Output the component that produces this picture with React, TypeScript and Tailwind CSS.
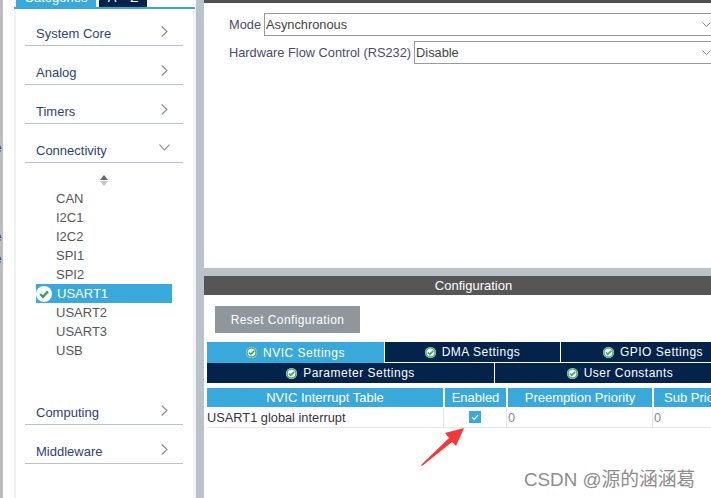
const font = "font-['Liberation_Sans',Arial,sans-serif]";

// tick badge used on the tabs (ringed) and on the selected peripheral (plain)
const OkBadge = ({ size = 11, ring = true }: { size?: number; ring?: boolean }) => (
  <svg width={size} height={size} viewBox="0 0 16 16" className="shrink-0">
    <circle cx="8" cy="8" r="8" fill="#ffffff" />
    {ring && <circle cx="8" cy="8" r="6.6" fill="#ffffff" stroke="#46ad72" strokeWidth="2.2" />}
    <path d="M4.2 8 7 10.8 12 5.4" fill="none" stroke="#3a9f63" strokeWidth="2.4" />
  </svg>
);

const ArrowRight = () => (
  <svg width="7" height="11" viewBox="0 0 7 11" className="mb-[7px]">
    <path d="M.7.5 6 5.5.7 10.5" fill="none" stroke="#8a8a8a" strokeWidth="1.1" />
  </svg>
);

const ArrowDown = () => (
  <svg width="11" height="7" viewBox="0 0 11 7" className="mb-[10px] -mr-[2px]">
    <path d="M.5.7 5.5 6 10.5.7" fill="none" stroke="#8a8a8a" strokeWidth="1.1" />
  </svg>
);

const Category = ({ label, open = false }: { label: string; open?: boolean }) => (
  <div className="h-[39px] border-b border-[#b9c4ca] flex items-end pb-px pl-[11px] pr-[15px] justify-between text-[13px] text-[#2f3f73]">
    <span className="leading-[20px]">{label}</span>
    {open ? <ArrowDown /> : <ArrowRight />}
  </div>
);

const peripherals = ["CAN", "I2C1", "I2C2", "SPI1", "SPI2", "USART1", "USART2", "USART3", "USB"];

const Sidebar = () => (
  <div className="w-[182px] shrink-0 flex flex-col">
    <div className="h-[7px] flex overflow-hidden shrink-0 text-[13px] leading-[14px] text-white">
      <div className="ml-[2px] w-[80px] h-[7px] bg-[#39a9dc] flex justify-center items-start">
        <span className="-mt-[9px]">Categories</span>
      </div>
      <div className="ml-[3px] w-[48px] h-[7px] bg-[#03234b] flex justify-center items-start gap-[14px]">
        <span className="-mt-[9px]">A</span>
        <span className="-mt-[9px]">Z</span>
      </div>
    </div>
    <div className="w-[181px] h-[2px] bg-[#39a9dc] shrink-0" />
    <div className="flex-1 border-l-2 border-r-[3px] border-[#f0f2f3] pl-[9px] pr-[10px]">
      <div className="-mt-[2px]">
        <Category label="System Core" />
        <Category label="Analog" />
        <Category label="Timers" />
        <Category label="Connectivity" open />
        <div className="h-[223px] flex flex-col pl-[11px]">
          <div className="h-[26px] flex flex-col items-center pt-[12px] gap-px w-[136px] shrink-0">
            <div className="w-0 h-0 border-x-[4px] border-x-transparent border-b-[5px] border-b-[#666]" />
            <div className="w-0 h-0 border-x-[4px] border-x-transparent border-t-[5px] border-t-[#c4c4c4]" />
          </div>
          {peripherals.map((name) =>
            name === "USART1" ? (
              <div key={name} className="h-[19px] w-[136px] bg-[#39a9dc] flex items-center text-[13px] text-white">
                <OkBadge size={16} ring={false} />
                <span className="ml-[5px]">{name}</span>
              </div>
            ) : (
              <div key={name} className="h-[19px] flex items-center pl-[20px] text-[13px] text-[#55565a]">
                {name}
              </div>
            ),
          )}
        </div>
        <Category label="Computing" />
        <Category label="Middleware" />
      </div>
    </div>
  </div>
);

const Field = ({ label, value }: { label: string; value: string }) => (
  <div className="flex items-center h-[23px] text-[12.8px]">
    <span className="text-[#4b4b6b] mr-[3px] whitespace-nowrap">{label}</span>
    <div className="flex-1 h-[23px] border border-r-0 border-[#999] flex items-center justify-between pl-px text-[#444]">
      <span>{value}</span>
      <svg width="9" height="6" viewBox="0 0 9 6">
        <path d="M.5.5 4.5 4.5 8.5.5" fill="none" stroke="#8a8a8a" strokeWidth="1" />
      </svg>
    </div>
  </div>
);

const Tab = ({ label, className }: { label: string; className: string }) => (
  <div className={`flex items-center justify-center gap-[6px] text-[12px] tracking-[0.5px] text-white ${className}`}>
    <OkBadge />
    <span>{label}</span>
  </div>
);

const Head = ({ label, className }: { label: string; className: string }) => (
  <div className={`h-[19px] bg-[#39a9dc] text-white text-[13px] flex items-center justify-center whitespace-nowrap shrink-0 ${className}`}>
    {label}
  </div>
);

const ConfigPanel = () => (
  <div className="w-[541px] flex-1 flex flex-col bg-white">
    <div className="h-[19px] w-[539px] bg-[#555655] text-white text-[13px] flex items-center justify-center shrink-0">
      Configuration
    </div>
    <button className="ml-[11px] mt-[11px] w-[145px] h-[27px] bg-[#8f969c] text-white text-[12px] tracking-[0.4px] shrink-0">
      Reset Configuration
    </button>
    <div className="ml-[3px] mt-[9px] flex flex-col w-[538px]">
      <div className="flex h-[21px] gap-px">
        <Tab label="NVIC Settings" className="w-[177px] bg-[#39a9dc]" />
        <Tab label="DMA Settings" className="w-[175px] h-[20px] bg-[#03234b]" />
        <Tab label="GPIO Settings" className="flex-1 h-[20px] bg-[#03234b]" />
      </div>
      <div className="flex h-[20px] gap-px">
        <Tab label="Parameter Settings" className="w-[287px] bg-[#03234b]" />
        <Tab label="User Constants" className="flex-1 bg-[#03234b]" />
      </div>
      <div className="flex gap-[2px] mt-[5px]">
        <Head label="NVIC Interrupt Table" className="w-[236px]" />
        <Head label="Enabled" className="w-[61px]" />
        <Head label="Preemption Priority" className="w-[144px]" />
        <Head label="Sub Priority" className="w-[90px] justify-start pl-[10px]" />
      </div>
      <div className="flex h-[21px] border-b border-[#e4e6e8] text-[12.8px]">
        <div className="w-[237px] border-r border-[#e4e6e8] text-[#3a3244] leading-[21px]">USART1 global interrupt</div>
        <div className="w-[63px] flex items-center justify-center border-r border-[#e4e6e8]">
          <div className="w-[12px] h-[12px] bg-[#39a9dc] flex items-center justify-center">
            <svg width="10" height="10" viewBox="0 0 10 10">
              <path d="M2 5.2 4.2 7.4 8.2 2.8" fill="none" stroke="#fff" strokeWidth="1.2" />
            </svg>
          </div>
        </div>
        <div className="w-[146px] border-r border-[#e4e6e8] pl-px text-[#8a8a8a] leading-[21px]">0</div>
        <div className="pl-px text-[#8a8a8a] leading-[21px]">0</div>
      </div>
    </div>
  </div>
);

export default function App() {
  return (
    <div className={`relative w-[711px] h-[498px] overflow-hidden bg-white flex ${font}`}>
      <div className="w-[14px] shrink-0 flex">
        <div className="w-[3px] bg-[#bdbdbd]" />
      </div>
      <Sidebar />
      <div className="w-[8px] shrink-0 bg-[#b9c4ca]" />
      <div className="flex-1 flex flex-col min-w-0">
        <div className="h-[3px] bg-[#505050] shrink-0" />
        <div className="h-[265px] shrink-0 flex flex-col gap-[5px] pt-[10px] pl-[25px]">
          <Field label="Mode" value="Asynchronous" />
          <Field label="Hardware Flow Control (RS232)" value="Disable" />
        </div>
        <div className="h-[8px] bg-[#b9c4ca] shrink-0" />
        <ConfigPanel />
      </div>

      {/* edge of the window sitting behind this one */}
      <span className="absolute left-[-5px] top-[139px] text-[12px] text-[#445]">e</span>
      <span className="absolute left-[-5px] top-[228px] text-[12px] text-[#445]">e</span>
      <span className="absolute left-[-5px] top-[250px] text-[12px] text-[#445]">e</span>

      {/* annotation arrow over the table */}
      <svg className="absolute left-[418px] top-[424px]" width="52" height="44" viewBox="0 0 52 44">
        <path d="M46 4 27 9 31 14 3 41 4 42 34 18 38 22Z" fill="#f5373a" />
      </svg>
      <span className="absolute left-[524px] top-[469px] text-[18.8px] leading-[22px] text-[#8c8c8c] font-['Liberation_Sans','Noto_Sans_CJK_SC',sans-serif]">
        CSDN @源的涵涵葛
      </span>
    </div>
  );
}
